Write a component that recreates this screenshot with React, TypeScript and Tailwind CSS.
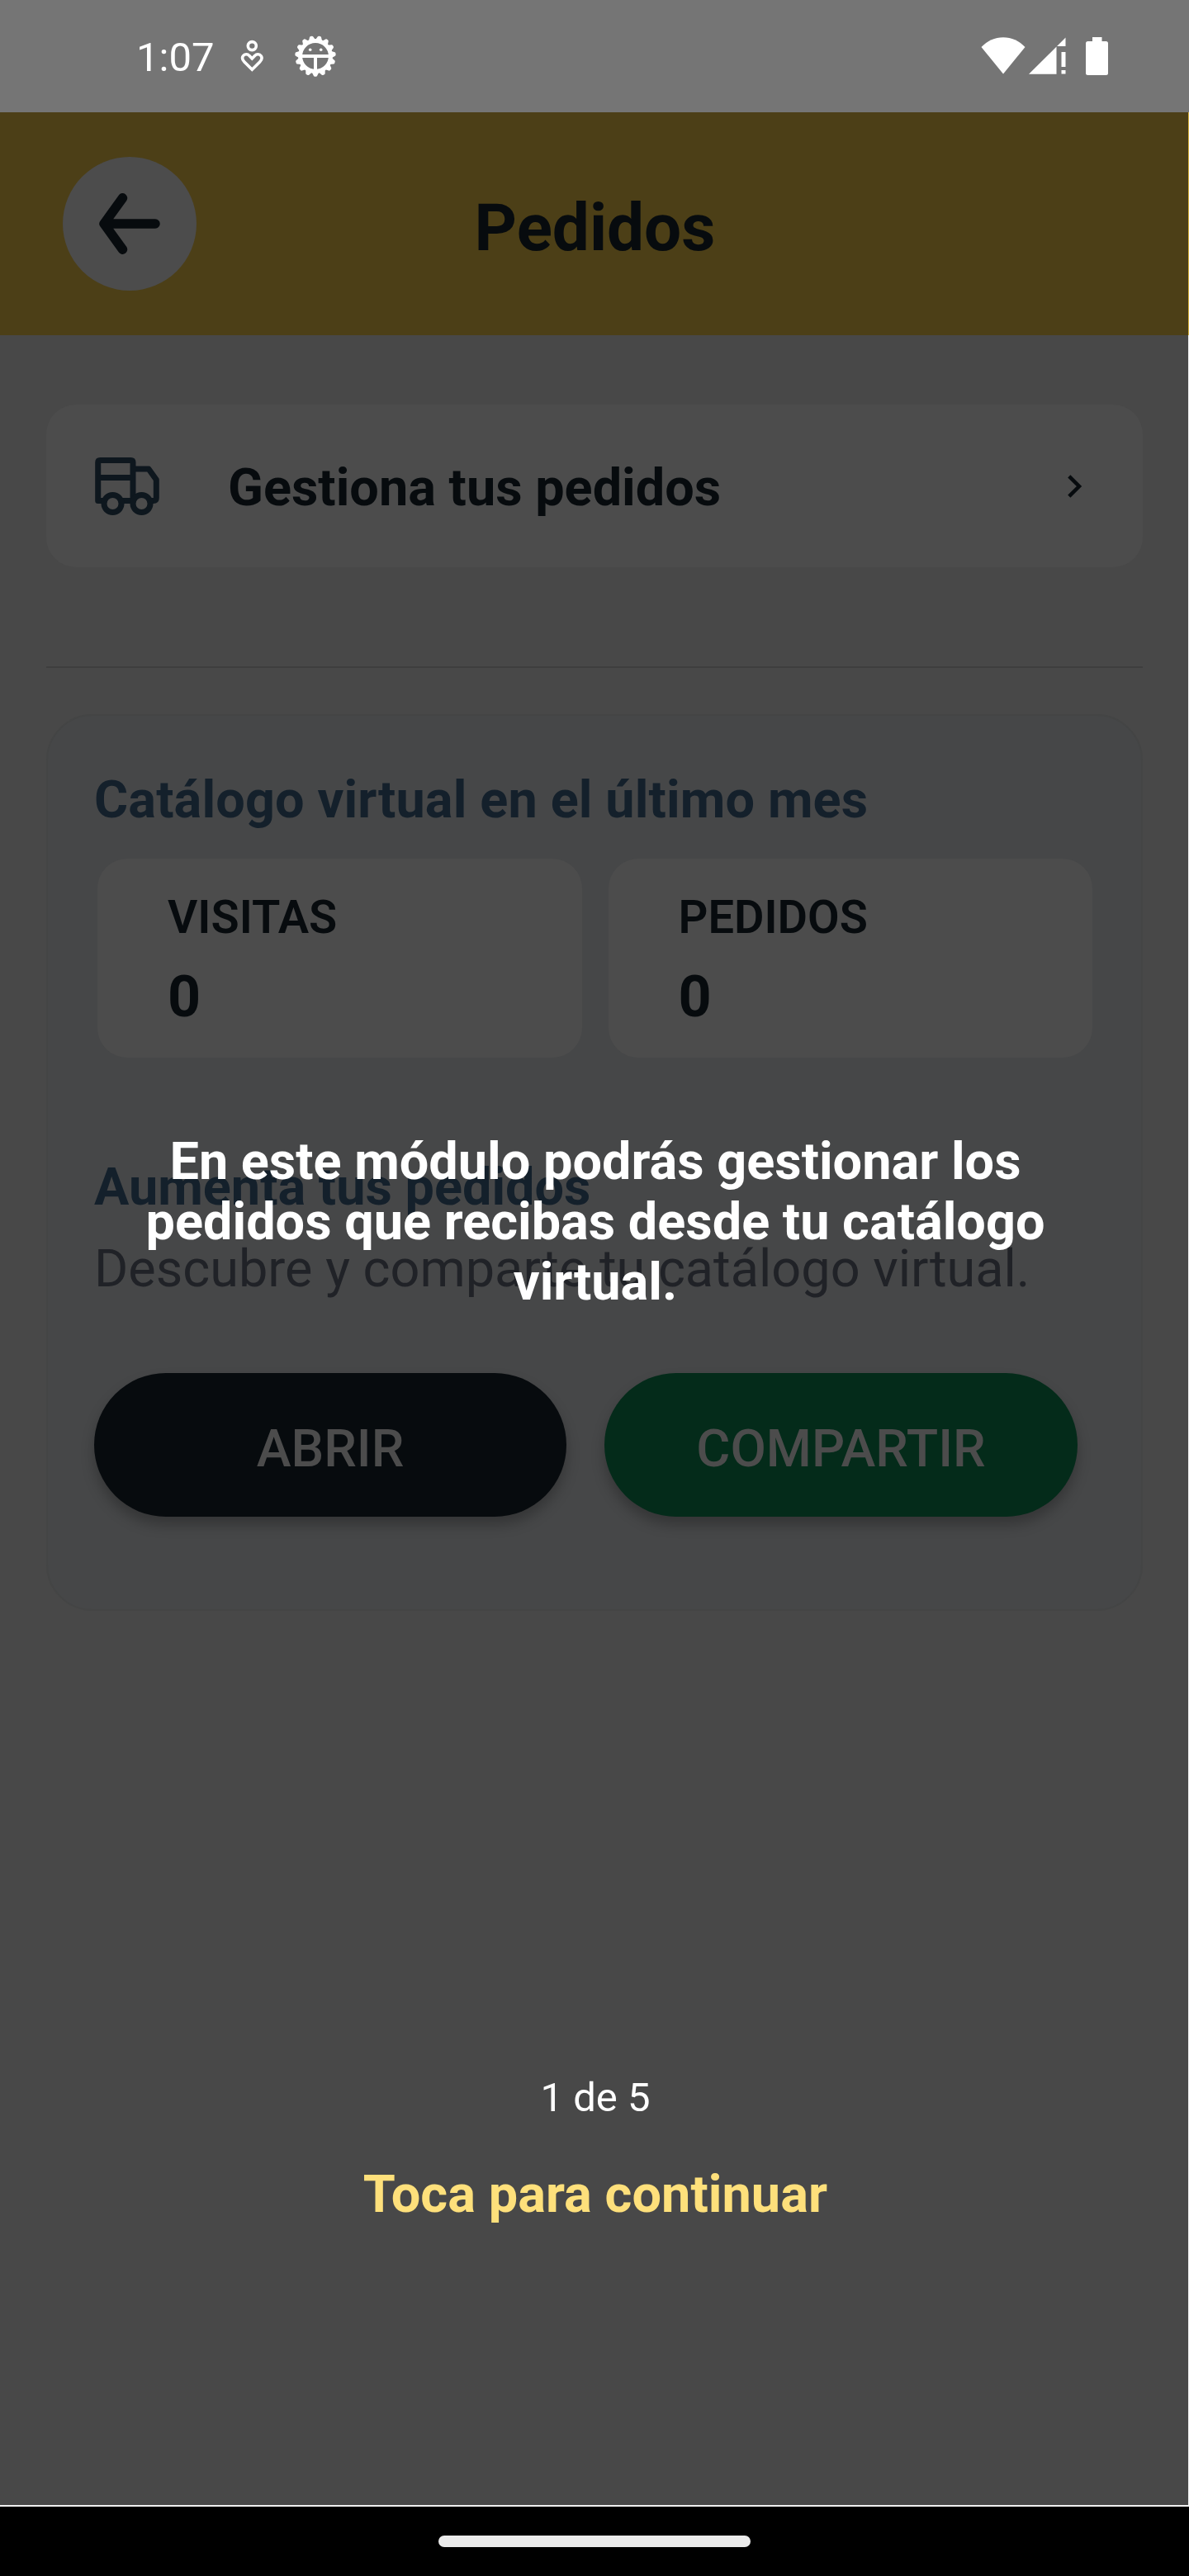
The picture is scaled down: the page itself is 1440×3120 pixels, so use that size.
const GEAR_TEETH = Array.from({ length: 15 }, (_, i) => 90 + i * 24);

function PersonHeartIcon() {
  return (
    <svg className="ml-[33px] h-[40px] w-[30px]" viewBox="290 48 30 40" fill="none" stroke="#fff" strokeWidth="3.6">
      <circle cx="305.3" cy="55.6" r="5" />
      <path d="M305.3 84.3 L296 75 C293.2 72 293 69.6 294.4 67.7 C296.2 65.2 300 65.2 301.8 67.3 L305.3 71 L308.8 67.3 C310.6 65.2 314.4 65.2 316.2 67.7 C317.6 69.6 317.4 72 314.6 75 Z" />
    </svg>
  );
}

function GearIcon() {
  return (
    <svg className="ml-[36px] h-[52px] w-[52px]" viewBox="-26 -26 52 52">
      <circle r="18.4" fill="none" stroke="#fff" strokeWidth="5" />
      {GEAR_TEETH.map((a) => (
        <path key={a} d="M18.5 -3 L23.2 -0.8 V0.8 L18.5 3 Z" fill="#fff" stroke="#fff" strokeWidth="3" strokeLinejoin="round" transform={`rotate(${a})`} />
      ))}
      <path d="M-17 0 H17 M0 0 V18" stroke="#fff" strokeWidth="4" />
      <circle cx="-6.3" cy="-7.7" r="1.8" fill="#fff" />
      <circle cx="6.7" cy="-7.7" r="1.8" fill="#fff" />
    </svg>
  );
}

function StatusBar() {
  return (
    <header className="flex h-[136px] items-center bg-[#757575] pl-[165px] text-white">
      <span className="mt-[4px] w-[92px] text-[49px] leading-[58px] whitespace-nowrap">1:07</span>
      <PersonHeartIcon />
      <GearIcon />
      <svg className="ml-auto h-[46px] w-[54px]" viewBox="1187.5 45 54 46" fill="#fff">
        <path d="M1214.5 89.5 L1188 57 C1195 49.5 1204.5 45.2 1214.5 45.2 C1224.5 45.2 1234 49.5 1241 57 Z" />
      </svg>
      <svg className="ml-[4px] h-[46px] w-[45px]" viewBox="1245.5 45 45 46" fill="#fff">
        <path d="M1245.5 89.7 L1279 56.5 V89.7 Z M1279.5 56 L1290 45.5 V56 Z M1285 63 H1290 V81 H1285 Z M1285 85 H1290 V89.5 H1285 Z" />
      </svg>
      <svg className="mr-[98px] ml-[24.5px] h-[46px] w-[27px]" viewBox="1315 45 27 46" fill="#fff">
        <rect x="1323" y="45" width="11.5" height="7" />
        <rect x="1315" y="50" width="27" height="41" rx="2.5" />
      </svg>
    </header>
  );
}

function TruckIcon() {
  return (
    <svg className="ml-[57px] h-[74px] w-[82px]" viewBox="113 552 82 74" fill="none" stroke="#0e171e" strokeWidth="7" strokeLinejoin="round">
      <path d="M118.7 606.5 V560 Q118.7 557.5 121.2 557.5 H158.5 Q161 557.5 161 560 V606.5 Z" />
      <path d="M118.7 578.5 H161" />
      <path d="M161 568 H180 L189.3 581 V603 Q189.3 606.5 185.8 606.5 H161" />
      <circle cx="136.5" cy="610" r="10.5" fill="#4c4c4c" />
      <circle cx="171.5" cy="610" r="10.5" fill="#4c4c4c" />
    </svg>
  );
}

function Stat({ label, value }: { label: string; value: string }) {
  return (
    <div className="h-[241px] flex-1 rounded-[36px] bg-[#4c4c4c] pt-[38px] pl-[85px] text-[#070b0e]">
      <div className="text-[56px] leading-[66px] font-semibold">{label}</div>
      <div className="mt-[22px] text-[70px] leading-[82px] font-bold">{value}</div>
    </div>
  );
}

function CatalogPanel() {
  return (
    <section className="mt-[56px] h-[1086px] rounded-[56px] border-2 border-[#444545] bg-[#464748] pl-[56px]">
      <h2 className="mt-[64.5px] text-[63px] leading-[74px] font-bold tracking-[0.12px] text-[#14202b]">Catálogo virtual en el último mes</h2>
      <div className="mt-[34px] ml-[4px] flex w-[1205px] gap-[32px]">
        <Stat label="VISITAS" value="0" />
        <Stat label="PEDIDOS" value="0" />
      </div>
      <h2 className="mt-[120.5px] text-[63px] leading-[74px] font-bold text-[#14202b]">Aumenta tus pedidos</h2>
      <p className="mt-[25px] text-[63px] leading-[74px] whitespace-nowrap text-[#202227]">Descubre y comparte tu catálogo virtual.</p>
      <div className="mt-[89px] flex gap-[46px] text-[63px] leading-[74px] font-medium text-[#4c4c4c]">
        <button className="h-[174px] w-[572px] rounded-[87px] bg-[#070b0e] pt-[9px] shadow-[0_10px_16px_rgba(0,0,0,0.25)]">ABRIR</button>
        <button className="h-[174px] w-[573px] rounded-[87px] bg-[#042b1a] pt-[9px] shadow-[0_10px_16px_rgba(0,0,0,0.25)]">COMPARTIR</button>
      </div>
    </section>
  );
}

export default function App() {
  return (
    <div className="relative flex h-[3120px] w-[1440px] flex-col overflow-hidden bg-[#484848] font-['Roboto',sans-serif]">
      <StatusBar />
      <div className="flex h-[270px] items-center border-r border-[#d9b544] bg-[#4c3f17] pl-[76px]">
        <button className="flex h-[162px] w-[162px] items-center justify-center rounded-full bg-[#4c4c4c]">
          <svg className="h-[78px] w-[78px]" viewBox="118 232 78 78" fill="none" stroke="#070b0e" strokeWidth="11.5" strokeLinecap="round" strokeLinejoin="round">
            <path d="M148.5 239.8 L126 271 L148.5 302.2 M126 271 H188" />
          </svg>
        </button>
        <h1 className="mt-[9px] mr-[236px] flex-1 text-center text-[80px] leading-[90px] font-bold text-[#070b0e]">Pedidos</h1>
      </div>
      <main className="flex-1 border-r border-[#f0f0f0] pt-[84px] pr-[55px] pl-[56px]">
        <div className="flex h-[197px] items-center rounded-[36px] bg-[#4c4c4c]">
          <TruckIcon />
          <span className="mt-[5px] ml-[81px] text-[63px] leading-[74px] font-bold text-[#070b0e]">Gestiona tus pedidos</span>
          <svg className="mr-[72px] ml-auto h-[32px] w-[20px]" viewBox="1291 573 20 32" fill="none" stroke="#070b0e" strokeWidth="4.5">
            <path d="M1293.8 576.8 L1306 589 L1293.8 601.2" />
          </svg>
        </div>
        <div className="mt-[120px] h-[2px] bg-[#3e3e3e]" />
        <CatalogPanel />
      </main>
      <footer className="flex h-[86px] justify-center border-t-2 border-[#f0f0f0] bg-black pt-[35px]">
        <div className="h-[14px] w-[378px] rounded-[7px] bg-[#ebebeb]" />
      </footer>
      <div className="absolute inset-x-0 top-[1369.5px] flex flex-col items-center pl-[2px] text-center text-white">
        <p className="h-[1142px] text-[63px] leading-[73px] font-bold">
          En este módulo podrás gestionar los
          <br />
          pedidos que recibas desde tu catálogo
          <br />
          virtual.
        </p>
        <p className="text-[49px] leading-[58px]">1 de 5</p>
        <p className="mt-[51px] text-[63px] leading-[74px] font-bold tracking-[0.06px] text-[#fee07b]">Toca para continuar</p>
      </div>
    </div>
  );
}
